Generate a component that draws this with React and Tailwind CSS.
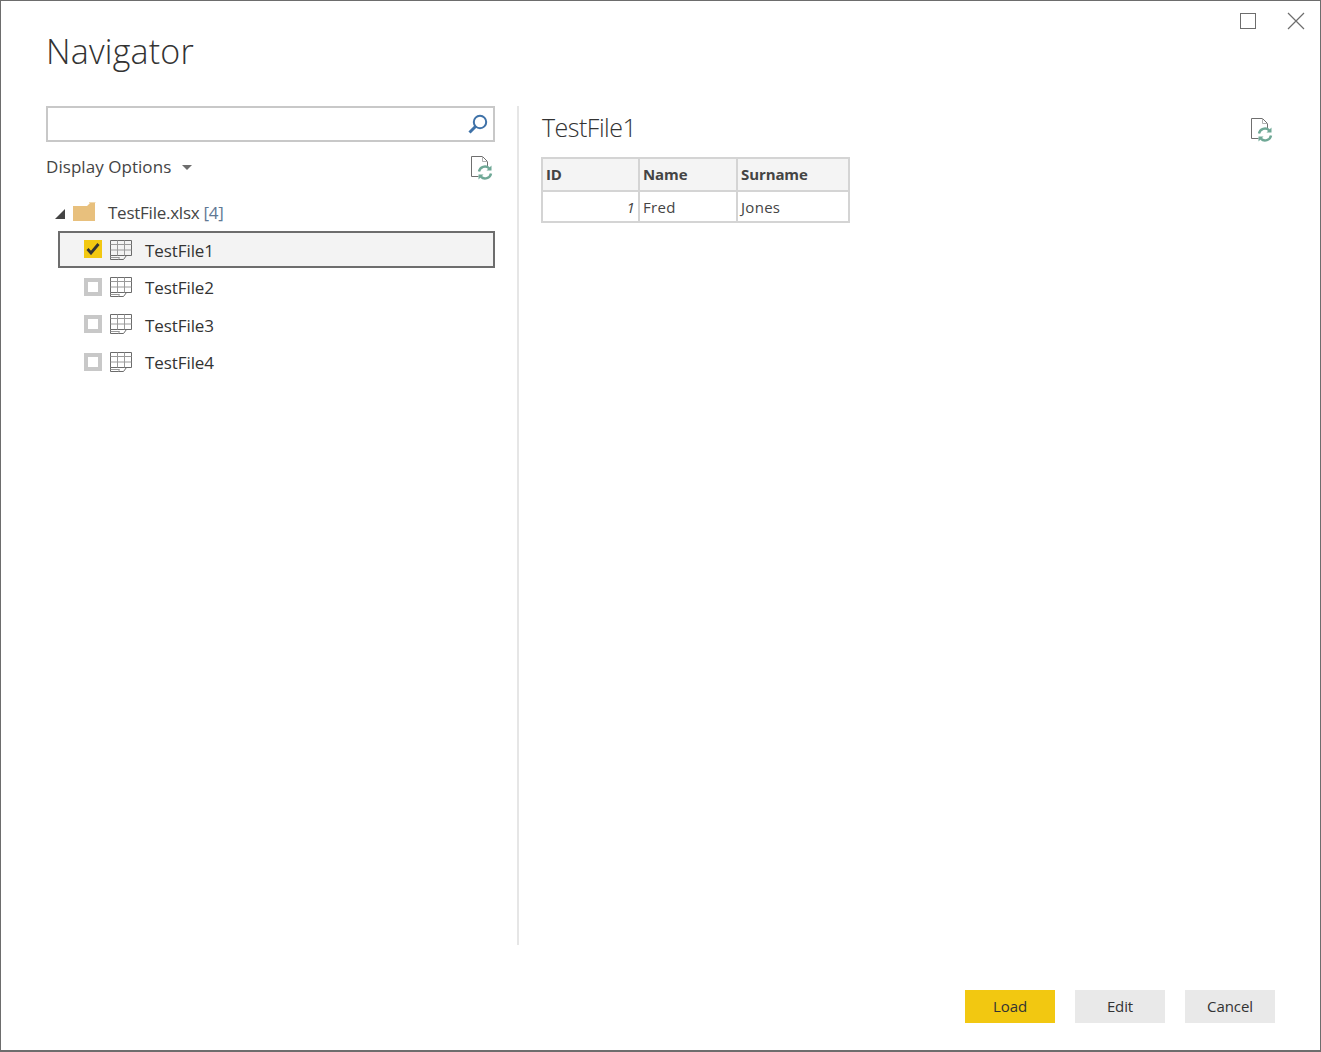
import React from "react";

const uiFont = "font-['Open_Sans','Noto_Sans',sans-serif]";

function TableIcon() {
  return (
    <svg width="23" height="22" viewBox="0 0 23 22" fill="none" stroke="#6b6b6b" strokeWidth="1" className="shrink-0">
      <path d="M1.5 1.5H22.5V16.5H1.5Z" />
      <path d="M1.5 5.5H22.5M1.5 11H22.5M8.5 1.5V16.5M15.5 1.5V16.5" stroke="#9a9a9a" />
      <path d="M1.5 16.5V20.5H14.5L17.5 16.5" />
      <path d="M9.5 20.5L10.5 18.5H1.5" stroke="#9a9a9a" />
    </svg>
  );
}

function RefreshFileIcon() {
  return (
    <svg width="24" height="26" viewBox="0 0 24 26" fill="none" className="block">
      <path d="M8.5 21.5H1.5V1.5H12.5L17.5 6.5V11" stroke="#6f6f6f" strokeWidth="1" />
      <path d="M12.5 1.5V6.5H17.5" stroke="#b0b0b0" strokeWidth="1" />
      <path d="M9 16.5a6 6 0 0 1 10.2-3.2" stroke="#6fa896" strokeWidth="2.4" />
      <path d="M21.5 10.5V15.5H16.5Z" fill="#6fa896" />
      <path d="M21 18.5a6 6 0 0 1-10.2 3.2" stroke="#6fa896" strokeWidth="2.4" />
      <path d="M8.5 24.5V19.5H13.5Z" fill="#6fa896" />
    </svg>
  );
}

function CheckBox({ checked }) {
  if (checked) {
    return (
      <span className="w-[18px] h-[18px] mb-[2px] bg-[#f2c811] flex items-center justify-center shrink-0">
        <svg width="14" height="12" viewBox="0 0 14 12" fill="none">
          <path d="M1.5 6L5 10L12.5 1" stroke="#333333" strokeWidth="2.8" />
        </svg>
      </span>
    );
  }
  return <span className="w-[18px] h-[18px] border-[4px] border-[#c8c8c8] bg-white shrink-0" />;
}

function TreeRow({ name, checked }) {
  return (
    <div className={"h-[37.4px] flex items-center pl-[24px] border-2 " + (checked ? "bg-[#f3f3f3] border-[#6d6d6d]" : "border-transparent")}>
      <CheckBox checked={checked} />
      <span className="ml-[7px] flex"><TableIcon /></span>
      <span className="ml-[13px] text-[17px] text-[#333333] tracking-[-0.08px] relative top-[1px]">{name}</span>
    </div>
  );
}

function Button({ label, primary }) {
  return (
    <button className={"w-[90px] h-[33px] text-[15px] tracking-[-0.1px] text-[#333333] " + (primary ? "bg-[#f2c811]" : "bg-[#e9e9e9]")}>
      {label}
    </button>
  );
}

export default function App() {
  return (
    <div className={"w-[1321px] h-[1052px] bg-white border border-b-2 border-[#6d6d6d] flex flex-col " + uiFont}>
      <div className="h-[105px] flex justify-between pl-[45px] pr-[15px]">
        <h1 className="mt-[26px] text-[34px] leading-[48px] font-light text-[#333333] tracking-[0.2px]">Navigator</h1>
        <div className="flex gap-[31px] mt-[11px] h-[18px] items-center">
          <span className="w-[16px] h-[16px] border-[1.5px] border-[#6d6d6d]" />
          <svg width="18" height="18" viewBox="0 0 18 18" stroke="#6d6d6d" strokeWidth="1.2">
            <path d="M1 1L17 17M17 1L1 17" />
          </svg>
        </div>
      </div>

      <div className="flex pl-[45px] h-[839px]">
        <div className="w-[449px]">
          <div className="h-[36px] border-2 border-[#c8c8c8] flex items-center justify-end pr-[4px]">
            <svg width="22" height="22" viewBox="0 0 22 22" fill="none" stroke="#3f72a8">
              <circle cx="13" cy="9" r="6.2" strokeWidth="2" />
              <path d="M8.5 13.5L2.5 19.5" strokeWidth="3" />
            </svg>
          </div>
          <div className="h-[50px] flex items-center justify-between">
            <div className="flex items-center">
              <span className="text-[17px] text-[#444444] tracking-[0.05px]">Display Options</span>
              <span className="ml-[11px] w-0 h-0 border-x-[5px] border-x-transparent border-t-[5px] border-t-[#6d6d6d]" />
            </div>
            <span className="mr-[1px] mt-[2px]"><RefreshFileIcon /></span>
          </div>
          <div className="h-[37px] mt-[2px] flex items-center pl-[9px]">
            <span className="w-0 h-0 border-l-[10px] border-l-transparent border-b-[10px] border-b-[#444444] mt-[2px]" />
            <svg width="23" height="19" viewBox="0 0 23 19" className="ml-[8px] mb-[2px]">
              <path d="M0 4H14L17 1H22V19H0Z" fill="#e8c07d" />
              <path d="M16 0.5H22.5" stroke="#f0d9ae" fill="none" />
            </svg>
            <span className="ml-[12px] text-[17px] text-[#444444] tracking-[-0.25px]">
              TestFile.xlsx <span className="text-[#5f7894]">[4]</span>
            </span>
          </div>
          <div className="ml-[12px]">
            <TreeRow name="TestFile1" checked />
            <TreeRow name="TestFile2" />
            <TreeRow name="TestFile3" />
            <TreeRow name="TestFile4" />
          </div>
        </div>

        <div className="ml-[22px] w-[2px] bg-[#e6e6e6]" />

        <div className="ml-[22px] w-[733px]">
          <div className="h-[51px] flex justify-between">
            <h2 className="pl-[1px] text-[25px] leading-[42px] font-light text-[#333333] tracking-[-0.5px]">TestFile1</h2>
            <span className="mt-[11px]"><RefreshFileIcon /></span>
          </div>
          <table className="border-collapse text-[15px] text-[#444444]">
            <tbody>
              <tr className="bg-[#f4f4f4] font-bold h-[33px] tracking-[-0.1px]">
                <td className="w-[97px] border-2 border-[#d4d4d4] pl-[3px]">ID</td>
                <td className="w-[98px] border-2 border-[#d4d4d4] pl-[3px]">Name</td>
                <td className="w-[112px] border-2 border-[#d4d4d4] pl-[3px]">Surname</td>
              </tr>
              <tr className="h-[31px] tracking-[0.3px]">
                <td className="border-2 border-[#d4d4d4] pr-[3px] pt-[2px] text-right italic">1</td>
                <td className="border-2 border-[#d4d4d4] pl-[3px] pt-[2px]">Fred</td>
                <td className="border-2 border-[#d4d4d4] pl-[3px] pt-[2px]">Jones</td>
              </tr>
            </tbody>
          </table>
        </div>
      </div>

      <div className="flex justify-end gap-[20px] pr-[45px] pt-[45px]">
        <Button label="Load" primary />
        <Button label="Edit" />
        <Button label="Cancel" />
      </div>
    </div>
  );
}
